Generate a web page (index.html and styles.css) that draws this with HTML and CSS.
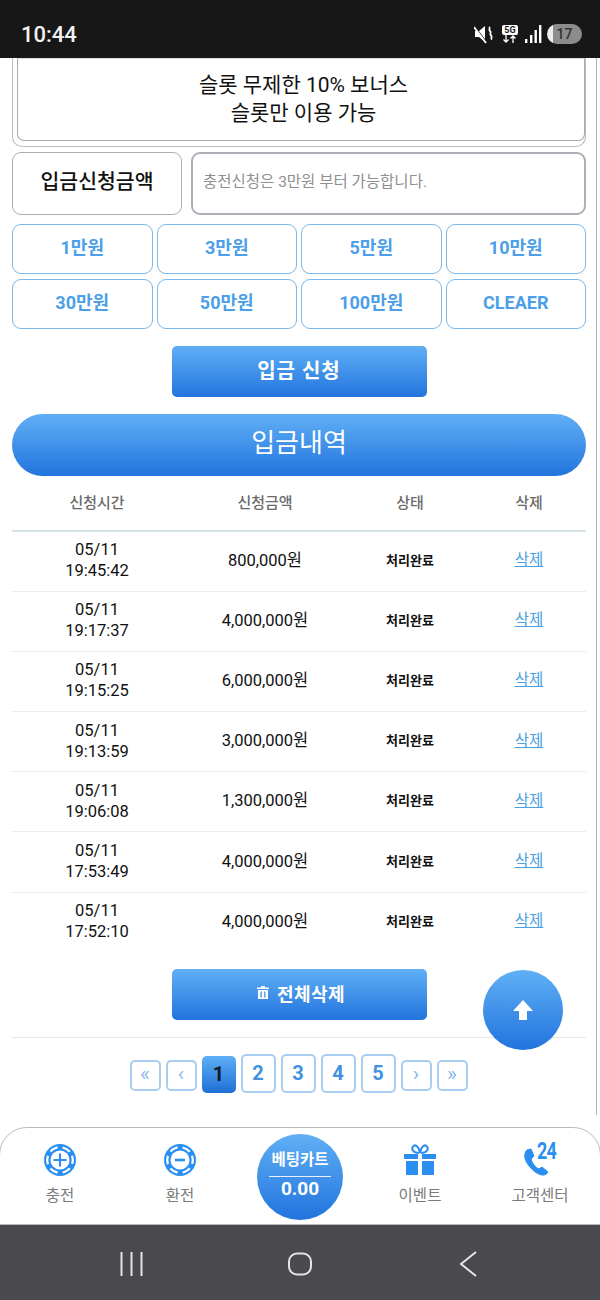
FILE: index.html
```html
<!DOCTYPE html>
<html lang="ko">
<head>
    <meta charset="UTF-8">
    <meta name="viewport" content="width=device-width, initial-scale=1.0">
    <link rel="stylesheet" href="styles.css">
    <title>입금내역</title>
</head>
<body>
<div class="phone">

    <div class="statusbar">
        <span class="clock">10:44</span>
        <div class="status-icons">
            <svg width="22" height="20" viewBox="0 0 22 20"><path d="M1 7h4l6-5v16l-6-5H1z" fill="#fff"/><path d="M0 1.500l13 17" stroke="#171717" stroke-width="1.200"/><path d="M0 3l12 16" stroke="#fff" stroke-width="1.800"/><path d="M15 3c2 1.500-1 2.500 1 4s-1 3 1 4.500-1 2.500 1 4" fill="none" stroke="#fff" stroke-width="1.800"/></svg>
            <div class="net">
                <span class="net-label">5G</span>
                <svg width="18" height="8" viewBox="0 0 18 8"><path d="M5 0v7M2.500 4.500L5 7l2.500-2.500M12 8V1M9.500 3.500L12 1l2.500 2.500" fill="none" stroke="#fff" stroke-width="1.300"/></svg>
            </div>
            <svg width="18" height="20" viewBox="0 0 18 20"><path d="M1 15h2.400v4H1zM6 11h2.400v8H6zM10.500 6h2.400v13h-2.400zM15 1h2.400v18H15z" fill="#fff"/></svg>
            <div class="battery"><span>17</span></div>
        </div>
    </div>

    <div class="page">
        <div class="notice-wrap">
            <div class="notice">슬롯 무제한 10% 보너스<br>슬롯만 이용 가능</div>
        </div>

        <div class="amount-row">
            <div class="amount-label">입금신청금액</div>
            <div class="amount-input">충전신청은 3만원 부터 가능합니다.</div>
        </div>

        <div class="quick-grid">
            <button class="quick">1만원</button>
            <button class="quick">3만원</button>
            <button class="quick">5만원</button>
            <button class="quick">10만원</button>
            <button class="quick">30만원</button>
            <button class="quick">50만원</button>
            <button class="quick">100만원</button>
            <button class="quick">CLEAER</button>
        </div>

        <button class="btn-main submit">입금 신청</button>

        <div class="title-pill">입금내역</div>

        <table class="history">
            <colgroup>
                <col class="col-time"><col class="col-amount"><col class="col-state"><col>
            </colgroup>
            <thead>
                <tr><th>신청시간</th><th>신청금액</th><th>상태</th><th>삭제</th></tr>
            </thead>
            <tbody>
                <tr><td>05/11<br>19:45:42</td><td>800,000원</td><td class="state">처리완료</td><td><a href="#">삭제</a></td></tr>
                <tr><td>05/11<br>19:17:37</td><td>4,000,000원</td><td class="state">처리완료</td><td><a href="#">삭제</a></td></tr>
                <tr><td>05/11<br>19:15:25</td><td>6,000,000원</td><td class="state">처리완료</td><td><a href="#">삭제</a></td></tr>
                <tr><td>05/11<br>19:13:59</td><td>3,000,000원</td><td class="state">처리완료</td><td><a href="#">삭제</a></td></tr>
                <tr><td>05/11<br>19:06:08</td><td>1,300,000원</td><td class="state">처리완료</td><td><a href="#">삭제</a></td></tr>
                <tr><td>05/11<br>17:53:49</td><td>4,000,000원</td><td class="state">처리완료</td><td><a href="#">삭제</a></td></tr>
                <tr><td>05/11<br>17:52:10</td><td>4,000,000원</td><td class="state">처리완료</td><td><a href="#">삭제</a></td></tr>
            </tbody>
        </table>

        <button class="btn-main delete-all">
            <svg width="12" height="13" viewBox="0 0 12 13"><path d="M4 0h4v1.500h4V3H0V1.500h4zM1 4h10v9H1zM3.500 5.500v6h1.300v-6zM7.200 5.500v6h1.300v-6z" fill="#fff" fill-rule="evenodd"/></svg>
            전체삭제
        </button>

        <div class="pager">
            <a class="pg small">«</a>
            <a class="pg small">‹</a>
            <a class="pg active">1</a>
            <a class="pg">2</a>
            <a class="pg">3</a>
            <a class="pg">4</a>
            <a class="pg">5</a>
            <a class="pg small">›</a>
            <a class="pg small">»</a>
        </div>

        <button class="to-top">
            <svg width="22" height="22" viewBox="0 0 22 22"><path d="M11 1l10 11h-6v9H7v-9H1z" fill="#fff"/></svg>
        </button>
    </div>

    <div class="bottom-nav">
        <div class="nav-item">
            <svg width="34" height="34" viewBox="0 0 34 34"><circle cx="17" cy="17" r="16" fill="#2a8ff0"/><circle cx="17" cy="17" r="12.800" fill="none" stroke="#fff" stroke-width="2.200" stroke-dasharray="8.400 5" transform="rotate(-20 17 17)"/><circle cx="17" cy="17" r="9.500" fill="#fff"/><path d="M17 10.500v13M10.500 17h13" stroke="#2a8ff0" stroke-width="2.200"/></svg>
            <span>충전</span>
        </div>
        <div class="nav-item">
            <svg width="34" height="34" viewBox="0 0 34 34"><circle cx="17" cy="17" r="16" fill="#2a8ff0"/><circle cx="17" cy="17" r="12.800" fill="none" stroke="#fff" stroke-width="2.200" stroke-dasharray="8.400 5" transform="rotate(-20 17 17)"/><circle cx="17" cy="17" r="9.500" fill="#fff"/><path d="M12 17h10" stroke="#2a8ff0" stroke-width="2.600"/></svg>
            <span>환전</span>
        </div>
        <div class="nav-cart">
            <div class="cart-title">베팅카트</div>
            <div class="cart-value">0.00</div>
        </div>
        <div class="nav-item">
            <svg width="34" height="34" viewBox="0 0 34 34"><path d="M1 11h14v5H1zM19 11h14v5H19zM3 18h12v14H3zM19 18h12v14H19z" fill="#2a8ff0"/><path d="M16 10C10 10 8 6 10 3.500s6-.5 7 6.500c1-7 5-9 7-6.500S24 10 18 10" fill="none" stroke="#2a8ff0" stroke-width="2"/></svg>
            <span>이벤트</span>
        </div>
        <div class="nav-item">
            <div class="call-icon">
                <svg width="30" height="34" viewBox="0 0 30 34"><path d="M4 7c-3 3-3 8 0 13s9 11 15 12c3 .5 5-1 6-3l-6-5-3 2c-3-1-7-6-8-10l3-3-3-7z" fill="#2a8ff0" stroke="#2a8ff0" stroke-linejoin="round"/></svg>
                <b>24</b>
            </div>
            <span>고객센터</span>
        </div>
    </div>

    <div class="softkeys">
        <svg width="24" height="24" viewBox="0 0 24 24"><path d="M1.500 0v24M11.500 0v24M21.500 0v24" stroke="#e4e4e4" stroke-width="2"/></svg>
        <svg width="24" height="24" viewBox="0 0 24 24"><rect x="1" y="1.500" width="22" height="21" rx="8" fill="none" stroke="#e4e4e4" stroke-width="2"/></svg>
        <svg width="22" height="26" viewBox="0 0 22 26"><path d="M20 1L5 13l15 12" fill="none" stroke="#e4e4e4" stroke-width="2"/></svg>
    </div>
</div>
</body>
</html>
```

FILE: styles.css
```css
* {
    box-sizing: border-box;
}

body {
    margin: 0;
    font-family: Roboto, "Noto Sans CJK KR", sans-serif;
    color: #111;
    background: #fff;
}

button {
    font-family: inherit;
    cursor: pointer;
}

.phone {
    width: 600px;
    height: 1300px;
    display: flex;
    flex-direction: column;
    overflow: hidden;
}

/* status bar */
.statusbar {
    height: 58px;
    background: #171717;
    color: #f2f2f2;
    display: flex;
    align-items: center;
    justify-content: space-between;
    padding: 10px 18px 0 21px;
}

.clock {
    font-size: 22px;
    font-weight: 500;
}

.status-icons {
    display: flex;
    align-items: center;
    gap: 5px;
}

.net {
    display: flex;
    flex-direction: column;
    align-items: center;
    width: 18px;
}

.net-label {
    background: #fff;
    color: #171717;
    font-size: 9px;
    font-weight: 700;
    line-height: 10px;
    padding: 0 2px;
    border-radius: 2px;
}

.battery {
    width: 35px;
    height: 20px;
    border-radius: 10px;
    background: linear-gradient(to right, #eee 0 18%, #8c8c8c 18%);
    color: #333;
    font-size: 14px;
    font-weight: 500;
    text-align: center;
    line-height: 20px;
}

/* page */
.page {
    position: relative;
    width: 597px;
    height: 1057px;
    padding: 0 10px 0 12px;
    border-right: 1px solid #b4b4b4;
}

.notice-wrap {
    height: 89px;
    padding: 0 0 5px 4px;
    border: 1px solid #bdbdbd;
    border-top: 0;
    border-radius: 0 0 10px 10px;
}

.notice {
    height: 83px;
    padding: 12px 0 0 5px;
    border: 1px solid #a9a9a9;
    border-top-color: #ddd;
    border-radius: 0 0 7px 7px;
    font-size: 21px;
    line-height: 28px;
    text-align: center;
}

.amount-row {
    display: flex;
    gap: 9px;
    height: 63px;
    margin-top: 5px;
}

.amount-label {
    width: 170px;
    border: 1px solid #adadad;
    border-radius: 9px;
    font-size: 20.500px;
    font-weight: 500;
    line-height: 59px;
    text-align: center;
}

.amount-input {
    flex: 1;
    border: 2px solid #aab0b6;
    border-radius: 9px;
    padding-left: 10px;
    color: #8f8f8f;
    font-size: 15.500px;
    line-height: 57px;
}

.quick-grid {
    display: grid;
    grid-template-columns: repeat(4, 1fr);
    gap: 5px 4px;
    margin-top: 9px;
}

.quick {
    height: 50px;
    background: #fff;
    border: 1.500px solid #79b8e8;
    border-radius: 9px;
    color: #4c9fe8;
    font-size: 18px;
    font-weight: 700;
    line-height: 22px;
    padding: 0 0 3px;
}

.btn-main {
    display: flex;
    align-items: center;
    justify-content: center;
    gap: 8px;
    width: 255px;
    height: 51px;
    margin: 0 auto;
    border: 0;
    border-radius: 5px;
    background: linear-gradient(#60aff5, #2274de);
    color: #fff;
    font-size: 20px;
    font-weight: 700;
    letter-spacing: 1px;
}

.submit {
    margin-top: 17px;
    padding-bottom: 5px;
}

.delete-all {
    margin-top: 17px;
    font-size: 18px;
    letter-spacing: 0.5px;
    padding: 0 0 4px 4px;
}

.title-pill {
    height: 62px;
    margin-top: 17px;
    border-radius: 31px;
    background: linear-gradient(#60aff5, #2274de);
    color: #fff;
    font-size: 26px;
    line-height: 59px;
    text-align: center;
}

/* table */
.history {
    width: 574px;
    border-collapse: collapse;
    table-layout: fixed;
}

.col-time {
    width: 170px;
}

.col-amount {
    width: 166px;
}

.col-state {
    width: 124px;
}

.history th {
    height: 55px;
    padding: 0 0 3px;
    border-bottom: 2px solid #d3e3e6;
    color: #6b6b6b;
    font-size: 15px;
    font-weight: 500;
}

.history td {
    height: 60.200px;
    padding: 0 0 2px;
    border-bottom: 1px solid #ececec;
    font-size: 16.500px;
    line-height: 21px;
    text-align: center;
}

.history tr:last-child td {
    border-bottom: 0;
}

.history .state {
    font-size: 13px;
    font-weight: 700;
}

.history a {
    color: #4c9fe0;
    font-size: 15.500px;
}

/* pager */
.pager {
    display: flex;
    align-items: center;
    justify-content: center;
    gap: 5px;
    margin: 17px 0 0 -1px;
    padding-top: 16px;
    border-top: 1px solid #e8e8e8;
}

.pg {
    width: 35px;
    height: 39px;
    border: 2px solid #a9cdf0;
    border-radius: 5px;
    color: #4391e0;
    font-size: 20px;
    font-weight: 700;
    line-height: 34px;
    text-align: center;
}

.pg.small {
    width: 31px;
    height: 31px;
    margin-top: 4px;
    color: #8ab9e8;
    font-size: 21px;
    font-weight: 400;
    line-height: 24px;
}

.pg.active {
    width: 34px;
    height: 37px;
    margin-top: 2px;
    border: 0;
    background: linear-gradient(#5eaef5, #1f6fd6);
    color: #0c1a2a;
    line-height: 36px;
}

.to-top {
    position: absolute;
    left: 483px;
    top: 912px;
    width: 80px;
    height: 80px;
    border: 0;
    border-radius: 50%;
    background: linear-gradient(#60aff5, #2274de);
    display: flex;
    align-items: center;
    justify-content: center;
}

/* bottom nav */
.bottom-nav {
    position: relative;
    height: 98px;
    margin: 12px -1px 0;
    border: 1px solid #b9b9b9;
    border-radius: 28px 28px 0 0;
    display: grid;
    grid-template-columns: repeat(5, 120px);
    background: #fff;
}

.nav-item {
    display: flex;
    flex-direction: column;
    align-items: center;
    padding-top: 15px;
    color: #7a7a7a;
    font-size: 15.500px;
}

.nav-item span {
    margin-top: 8px;
    line-height: 22px;
}

.nav-cart {
    width: 86px;
    height: 86px;
    margin: 6px auto 0;
    border-radius: 50%;
    background: linear-gradient(#60aff5, #2274de);
    color: #fff;
    text-align: center;
    padding-top: 16px;
}

.cart-title {
    width: 62px;
    margin: 0 auto;
    padding-bottom: 6px;
    border-bottom: 1px solid #e8f2fc;
    font-size: 15.500px;
    font-weight: 700;
    line-height: 20px;
}

.cart-value {
    font-size: 19px;
    font-weight: 700;
    line-height: 23px;
}

.call-icon {
    position: relative;
    width: 34px;
    height: 34px;
}

.call-icon svg {
    display: block;
}

.call-icon b {
    position: absolute;
    left: 14px;
    top: -5px;
    color: #2a8ff0;
    font-size: 23px;
    letter-spacing: -1px;
    transform: scaleX(0.78);
    transform-origin: left top;
}

/* android keys */
.softkeys {
    flex: 1;
    background: #4a4a4e;
    display: flex;
    align-items: center;
    padding: 2px 0 0 120px;
    gap: 144px;
}
```
